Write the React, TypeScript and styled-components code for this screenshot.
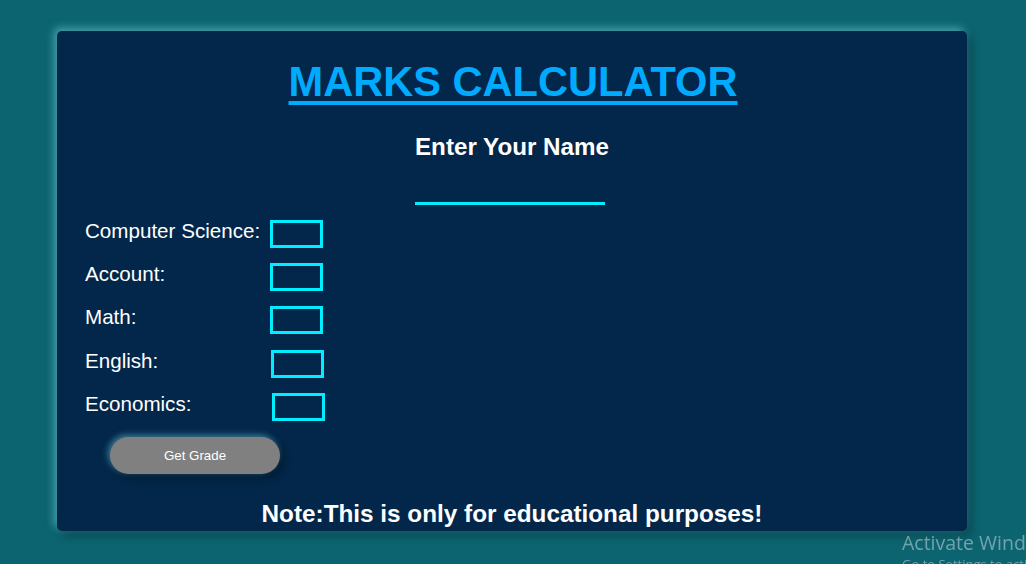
import React from "react";
import styled, { createGlobalStyle } from "styled-components";

const GlobalStyle = createGlobalStyle`
  html, body {
    margin: 0;
    padding: 0;
    background: #0b6470;
    font-family: "Liberation Sans", Arial, sans-serif;
    overflow: hidden;
  }
`;

const Page = styled.div`
  width: 1026px;
  height: 564px;
  padding: 31px 0 0 57px;
  box-sizing: border-box;
`;

const Card = styled.main`
  width: 910px;
  height: 500px;
  box-sizing: border-box;
  padding: 27px 28px 0;
  background: #03274a;
  border-radius: 5px;
  box-shadow: -3px -3px 8px rgba(120, 215, 225, 0.55),
    5px 5px 10px rgba(0, 0, 0, 0.28);
  display: flex;
  flex-direction: column;
`;

const Title = styled.h1`
  margin: 0 0 0 2px;
  text-align: center;
  font-size: 41.6px;
  line-height: 48px;
  font-weight: 700;
  color: #00aaff;
  text-decoration: underline;
  text-decoration-thickness: 4px;
  text-underline-offset: 5px;
`;

const Subtitle = styled.h2`
  margin: 27px 0 0;
  text-align: center;
  font-size: 24.2px;
  line-height: 28px;
  font-weight: 700;
  color: #ffffff;
`;

const NameWrap = styled.div`
  display: flex;
  justify-content: center;
  margin-top: 14px;
`;

const NameInput = styled.input`
  width: 190px;
  height: 30px;
  margin-right: 4px;
  box-sizing: border-box;
  background: transparent;
  border: none;
  border-bottom: 3px solid #00eeff;
  outline: none;
  color: #fff;
  font-size: 18px;
  text-align: center;
`;

const Form = styled.div`
  display: flex;
  flex-direction: column;
  gap: 15.2px;
  margin-top: 15px;
`;

const Row = styled.div`
  display: flex;
  align-items: flex-start;
  height: 28px;
`;

const Label = styled.label`
  width: 185px;
  font-size: 20.6px;
  line-height: 22px;
  color: #ffffff;
  white-space: nowrap;
`;

const MarkInput = styled.input<{ $shift: number }>`
  width: 53px;
  height: 28px;
  margin-left: ${(p) => p.$shift}px;
  box-sizing: border-box;
  background: transparent;
  border: 3px solid #00eeff;
  outline: none;
  color: #fff;
  padding: 0 3px;
`;

const Button = styled.button`
  align-self: flex-start;
  margin: 16px 0 0 25px;
  width: 170px;
  height: 37px;
  border: none;
  border-radius: 20px;
  background: #808080;
  color: #ffffff;
  font-family: "Liberation Sans", Arial, sans-serif;
  font-size: 13.33px;
  box-shadow: -2px -2px 6px rgba(120, 215, 225, 0.5),
    4px 4px 8px rgba(0, 0, 0, 0.35);
  cursor: pointer;
`;

const Note = styled.p`
  margin: 26px 0 0;
  text-align: center;
  font-size: 24.3px;
  line-height: 28px;
  font-weight: 700;
  color: #ffffff;
`;

const Watermark = styled.div`
  position: fixed;
  left: 902px;
  top: 530px;
  font-family: "Open Sans", "Noto Sans", sans-serif;
  color: rgba(200, 215, 220, 0.55);
  white-space: nowrap;
  pointer-events: none;
`;

const WatermarkTitle = styled.div`
  font-size: 19.5px;
  line-height: 26px;
`;

const WatermarkSub = styled.div`
  font-size: 13px;
  line-height: 16px;
`;

const subjects = [
  { name: "Computer Science:", shift: 0 },
  { name: "Account:", shift: 0 },
  { name: "Math:", shift: 0 },
  { name: "English:", shift: 1 },
  { name: "Economics:", shift: 2 },
];

export default function App() {
  return (
    <>
      <GlobalStyle />
      <Page>
        <Card>
          <Title>MARKS CALCULATOR</Title>
          <Subtitle>Enter Your Name</Subtitle>
          <NameWrap>
            <NameInput type="text" />
          </NameWrap>
          <Form>
            {subjects.map((s) => (
              <Row key={s.name}>
                <Label>{s.name}</Label>
                <MarkInput type="text" $shift={s.shift} />
              </Row>
            ))}
          </Form>
          <Button>Get Grade</Button>
          <Note>Note:This is only for educational purposes!</Note>
        </Card>
      </Page>
      <Watermark>
        <WatermarkTitle>Activate Windows</WatermarkTitle>
        <WatermarkSub>Go to Settings to activate Windows.</WatermarkSub>
      </Watermark>
    </>
  );
}
